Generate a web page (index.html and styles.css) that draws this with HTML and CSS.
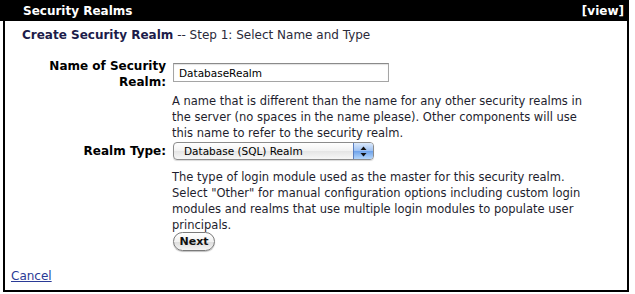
FILE: index.html
```html
<!DOCTYPE html>
<html lang="en">
<head>
    <meta charset="UTF-8">
    <title>Security Realms</title>
    <link rel="stylesheet" href="styles.css">
</head>
<body>
    <div class="panel">
        <div class="panel-header">
            <span>Security Realms</span>
            <a href="#" class="view-link">[view]</a>
        </div>

        <p class="step-title"><b>Create Security Realm</b> -- Step 1: Select Name and Type</p>

        <form class="wizard-form">
            <label class="field-label" for="realmName">Name of Security Realm:</label>
            <div class="field">
                <input type="text" id="realmName" class="text-input" value="DatabaseRealm">
                <p class="help">A name that is different than the name for any other security realms in<br>
                    the server (no spaces in the name please). Other components will use<br>
                    this name to refer to the security realm.</p>
            </div>

            <label class="field-label single" for="realmType">Realm Type:</label>
            <div class="field">
                <div class="popup">
                    <select id="realmType" class="popup-select">
                        <option>Database (SQL) Realm</option>
                        <option>Certificate Properties File Realm</option>
                        <option>Properties File Realm</option>
                        <option>LDAP Realm</option>
                        <option>Other</option>
                    </select>
                    <span class="popup-arrows">
                        <svg width="7" height="11" viewBox="0 0 7 11">
                            <path d="M3.5 0.5 L6.5 4 L0.5 4 Z" fill="#111"/>
                            <path d="M3.5 10.5 L6.5 7 L0.5 7 Z" fill="#111"/>
                        </svg>
                    </span>
                </div>
                <p class="help">The type of login module used as the master for this security realm.<br>
                    Select "Other" for manual configuration options including custom login<br>
                    modules and realms that use multiple login modules to populate user<br>
                    principals.</p>
                <button type="button" class="aqua-button">Next</button>
            </div>
        </form>

        <p class="cancel"><a href="#">Cancel</a></p>
    </div>
</body>
</html>
```

FILE: styles.css
```css
body {
    margin: 0;
    font-family: "DejaVu Sans", Verdana, sans-serif;
    font-size: 12px;
    color: #222;
    background-color: #fff;
}

.panel {
    margin-left: 3px;
    width: 622px;
    height: 290px;
    border: 2px solid #000;
    border-top: 0;
}

.panel-header {
    display: flex;
    justify-content: space-between;
    align-items: center;
    height: 21px;
    margin: 0 -2px 0 -5px;
    padding: 0 5px 0 23px;
    background-color: #000;
    color: #fff;
    font-weight: bold;
}

.view-link {
    color: #fff;
    text-decoration: none;
}

.step-title {
    margin: 6px 0 0 17px;
    line-height: 16px;
    color: #2a2a3a;
}

.step-title b {
    color: #1c1c4a;
}

.wizard-form {
    display: grid;
    grid-template-columns: 125px 1fr;
    column-gap: 6px;
    padding-left: 36px;
    margin-top: 15px;
}

.field-label {
    text-align: right;
    font-weight: bold;
    line-height: 16px;
    color: #000;
}

.field-label.single {
    margin-top: 1px;
    padding-top: 1px;
}

.field {
    padding-left: 1px;
}

.text-input {
    box-sizing: border-box;
    display: block;
    width: 216px;
    height: 19px;
    margin-top: 5px;
    padding: 1px 5px 0;
    border: 1px solid #a5a5a5;
    border-top-color: #8a8a8a;
    box-shadow: inset 0 1px 1px rgba(0, 0, 0, 0.12);
    font-family: "DejaVu Sans", Verdana, sans-serif;
    font-size: 10.5px;
    color: #000;
}

.help {
    width: 450px;
    margin: 11px 0 0 -1px;
    font-size: 11.5px;
    line-height: 16px;
    color: #1e1e2e;
}

.popup {
    position: relative;
    box-sizing: border-box;
    width: 201px;
    height: 18px;
    margin-top: 1px;
    border: 1px solid #8c8c8c;
    border-radius: 4px;
    background: linear-gradient(#ffffff, #f2f2f2 50%, #e4e4e4 51%, #f7f7f7);
    box-shadow: 0 1px 1px rgba(0, 0, 0, 0.15);
    overflow: hidden;
}

.popup-select {
    -webkit-appearance: none;
    appearance: none;
    width: 100%;
    height: 16px;
    padding: 0 0 0 10px;
    border: 0;
    background: transparent;
    font-family: "DejaVu Sans", Verdana, sans-serif;
    font-size: 10.5px;
    color: #000;
}

.popup-arrows {
    position: absolute;
    top: 0;
    right: 0;
    bottom: 0;
    width: 19px;
    display: flex;
    align-items: center;
    justify-content: center;
    border-left: 1px solid #5b7fc0;
    background: linear-gradient(#dbe9fc, #9cc0f2 50%, #6ea2ea 51%, #b4d6fb);
    pointer-events: none;
}

.popup + .help {
    margin-top: 9px;
}

.aqua-button {
    display: block;
    box-sizing: border-box;
    width: 42px;
    height: 19px;
    margin-top: -1px;
    padding: 0;
    border: 1px solid #7a7a7a;
    border-radius: 10px;
    background: linear-gradient(#ffffff, #f1f1f1 50%, #dcdcdc 51%, #f4f4f4);
    box-shadow: 0 1px 1px rgba(0, 0, 0, 0.25);
    font-family: "DejaVu Sans", Verdana, sans-serif;
    font-size: 11px;
    font-weight: bold;
    color: #111;
}

.cancel {
    margin: 17px 0 0 6px;
    line-height: 16px;
}

.cancel a {
    color: #2a3a96;
}
```
